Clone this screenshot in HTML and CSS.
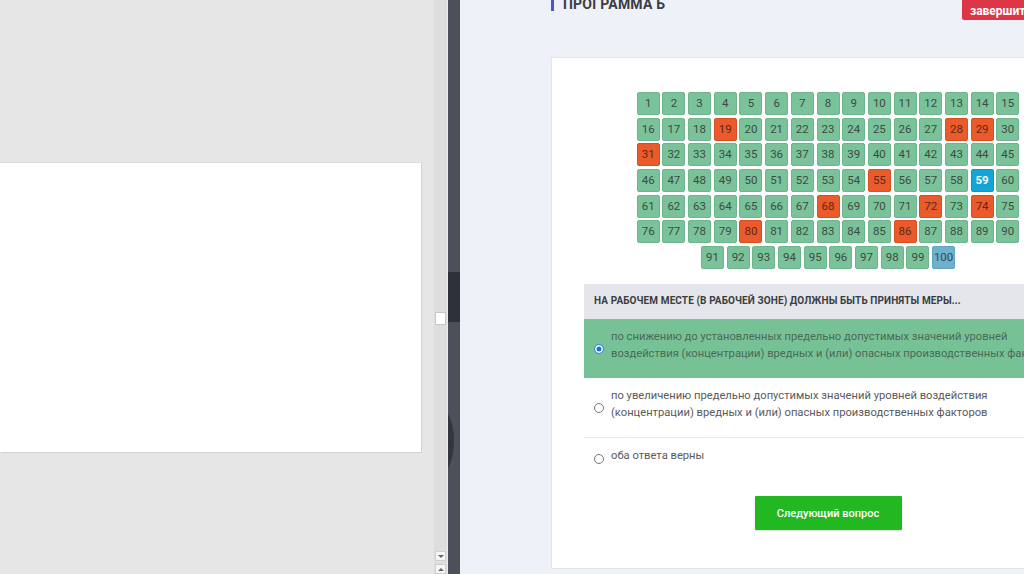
FILE: index.html
```html
<!DOCTYPE html>
<html lang="ru">
<head>
<meta charset="utf-8">
<title>Программа Б</title>
<link rel="stylesheet" href="styles.css">
</head>
<body>
<div class="left">
  <div class="slide"></div>
</div>
<div class="scroll">
  <div class="thumb"></div>
  <div class="arrow arrow-down"></div>
  <div class="arrow arrow-up"></div>
</div>
<div class="dark">
  <div class="dark-block"></div>
  <div class="dark-arc"></div>
</div>
<main class="main">
  <header class="top">
    <h1 class="title">ПРОГРАММА Б</h1>
    <button class="finish">завершить</button>
  </header>
  <section class="card">
    <div class="grid">
      <span class="cell">1</span><span class="cell">2</span><span class="cell">3</span><span class="cell">4</span><span class="cell">5</span><span class="cell">6</span><span class="cell">7</span><span class="cell">8</span><span class="cell">9</span><span class="cell">10</span><span class="cell">11</span><span class="cell">12</span><span class="cell">13</span><span class="cell">14</span><span class="cell">15</span>
      <span class="cell">16</span><span class="cell">17</span><span class="cell">18</span><span class="cell wrong">19</span><span class="cell">20</span><span class="cell">21</span><span class="cell">22</span><span class="cell">23</span><span class="cell">24</span><span class="cell">25</span><span class="cell">26</span><span class="cell">27</span><span class="cell wrong">28</span><span class="cell wrong">29</span><span class="cell">30</span>
      <span class="cell wrong">31</span><span class="cell">32</span><span class="cell">33</span><span class="cell">34</span><span class="cell">35</span><span class="cell">36</span><span class="cell">37</span><span class="cell">38</span><span class="cell">39</span><span class="cell">40</span><span class="cell">41</span><span class="cell">42</span><span class="cell">43</span><span class="cell">44</span><span class="cell">45</span>
      <span class="cell">46</span><span class="cell">47</span><span class="cell">48</span><span class="cell">49</span><span class="cell">50</span><span class="cell">51</span><span class="cell">52</span><span class="cell">53</span><span class="cell">54</span><span class="cell wrong">55</span><span class="cell">56</span><span class="cell">57</span><span class="cell">58</span><span class="cell current">59</span><span class="cell">60</span>
      <span class="cell">61</span><span class="cell">62</span><span class="cell">63</span><span class="cell">64</span><span class="cell">65</span><span class="cell">66</span><span class="cell">67</span><span class="cell wrong">68</span><span class="cell">69</span><span class="cell">70</span><span class="cell">71</span><span class="cell wrong">72</span><span class="cell">73</span><span class="cell wrong">74</span><span class="cell">75</span>
      <span class="cell">76</span><span class="cell">77</span><span class="cell">78</span><span class="cell">79</span><span class="cell wrong">80</span><span class="cell">81</span><span class="cell">82</span><span class="cell">83</span><span class="cell">84</span><span class="cell">85</span><span class="cell wrong">86</span><span class="cell">87</span><span class="cell">88</span><span class="cell">89</span><span class="cell">90</span>
      <span class="cell">91</span><span class="cell">92</span><span class="cell">93</span><span class="cell">94</span><span class="cell">95</span><span class="cell">96</span><span class="cell">97</span><span class="cell">98</span><span class="cell">99</span><span class="cell pending">100</span>
    </div>
    <div class="question">
      <div class="q-title">НА РАБОЧЕМ МЕСТЕ (В РАБОЧЕЙ ЗОНЕ) ДОЛЖНЫ БЫТЬ ПРИНЯТЫ МЕРЫ...</div>
      <label class="answer selected">
        <span class="radio"></span>
        <span class="a-text">по снижению до установленных предельно допустимых значений уровней воздействия (концентрации) вредных и (или) опасных производственных факторов</span>
      </label>
      <label class="answer bordered">
        <span class="radio"></span>
        <span class="a-text">по увеличению предельно допустимых значений уровней воздействия (концентрации) вредных и (или) опасных производственных факторов</span>
      </label>
      <label class="answer">
        <span class="radio"></span>
        <span class="a-text">оба ответа верны</span>
      </label>
    </div>
    <div class="actions">
      <button class="next">Следующий вопрос</button>
    </div>
  </section>
</main>
</body>
</html>
```

FILE: styles.css
```css
* { box-sizing: border-box; }

html, body {
  margin: 0;
  padding: 0;
}

body {
  width: 1024px;
  height: 574px;
  overflow: hidden;
  display: flex;
  font-family: Roboto, "Liberation Sans", Arial, sans-serif;
  background: #e6e6e6;
}

.left {
  width: 434px;
  flex: none;
  background: #e6e6e6;
  padding-top: 162px;
}

.slide {
  width: 421px;
  height: 290px;
  background: #ffffff;
  border-top: 1px solid #dcdcdc;
  box-shadow: 1px 1px 0 #d2d2d2;
}

.scroll {
  width: 14px;
  flex: none;
  background: #dedede;
  border-right: 1px solid #eaeaea;
  display: flex;
  flex-direction: column;
  align-items: center;
  padding-top: 312px;
}

.thumb {
  width: 11px;
  height: 14px;
  background: #ffffff;
  border: 1px solid #c8c8c8;
}

.arrow {
  width: 11px;
  height: 11px;
  background: #f6f6f6;
  border: 1px solid #d0d0d0;
  position: relative;
}

.arrow-down { margin-top: 226px; }
.arrow-up { margin-top: 3px; }

.arrow::after {
  content: "";
  position: absolute;
  left: 2px;
  top: 3px;
  border-left: 3px solid transparent;
  border-right: 3px solid transparent;
}

.arrow-down::after { border-top: 3px solid #666; }
.arrow-up::after { border-bottom: 3px solid #666; }

.dark {
  width: 12px;
  flex: none;
  background: #4c505b;
  padding-top: 272px;
  overflow: hidden;
}

.dark-block {
  width: 12px;
  height: 50px;
  background: #2e3139;
}

.dark-arc {
  margin-top: 86px;
  margin-left: -22px;
  width: 28px;
  height: 66px;
  border-radius: 50%;
  background: #33363f;
}

.main {
  flex: 1;
  background: #eef1f8;
  padding-left: 91px;
  overflow: hidden;
  min-width: 0;
}

.top {
  display: flex;
  align-items: flex-start;
  height: 59px;
  margin-top: -2px;
}

.title {
  margin: 0;
  width: 411px;
  flex: none;
  font-size: 14px;
  font-weight: 700;
  line-height: 13px;
  color: #3a3d45;
  padding-left: 9px;
  border-left: 3px solid #4a58c8;
  letter-spacing: 0.2px;
}

.finish {
  flex: none;
  border: 0;
  background: #dc3545;
  color: #ffffff;
  font-family: inherit;
  font-size: 12px;
  font-weight: 700;
  height: 22px;
  padding: 3px 8px 0;
  line-height: 14px;
  border-radius: 2px;
  white-space: nowrap;
}

.card {
  width: 554px;
  background: #ffffff;
  border: 1px solid #e2e5ec;
  padding: 34px 32px 38px;
}

.grid {
  width: 383px;
  margin: 0 auto;
  display: flex;
  flex-wrap: wrap;
  justify-content: center;
  gap: 2.7px;
}

.cell {
  width: 23px;
  height: 23px;
  border-radius: 2px;
  background: #7ac299;
  border: 1px solid #6eb58d;
  color: #3f4a44;
  font-size: 11.5px;
  line-height: 21px;
  text-align: center;
}

.cell.wrong {
  background: #ea5a2b;
  border-color: #d94f22;
  color: #5a2a1a;
}

.cell.current {
  background: #13a4d8;
  border-color: #0e96c8;
  color: #ffffff;
  font-weight: 700;
}

.cell.pending {
  background: #6fb0cc;
  border-color: #64a3bf;
  color: #34495a;
}

.question {
  margin-top: 15px;
  width: 490px;
}

.q-title {
  background: #e4e6eb;
  height: 35px;
  padding: 11px 0 0 10px;
  font-size: 10px;
  font-weight: 700;
  color: #3a3d42;
  white-space: nowrap;
  letter-spacing: 0.1px;
}

.answer {
  display: flex;
  align-items: center;
  gap: 7px;
  padding: 9px 10px 9px 10px;
}

.answer.selected {
  background: #77c197;
}

.answer.bordered {
  border-bottom: 1px solid #e8e8e8;
}

.a-text {
  font-size: 11.2px;
  line-height: 17px;
  color: #5a5a5a;
  margin-bottom: 7px;
}

.answer.selected .a-text {
  color: #4b6a58;
}

.radio {
  flex: none;
  width: 10px;
  height: 10px;
  border-radius: 50%;
  border: 1px solid #777;
  background: #ffffff;
}

.answer.selected .radio {
  border-color: #3d8be0;
  background: #1f6fd8;
  box-shadow: inset 0 0 0 1.5px #ffffff;
}

.actions {
  display: flex;
  justify-content: center;
  margin-top: 16px;
}

.next {
  width: 147px;
  height: 34px;
  border: 0;
  background: #22b822;
  color: #ffffff;
  font-family: inherit;
  font-size: 11px;
  font-weight: 500;
  border-radius: 1px;
  box-shadow: 0 1px 2px rgba(0,0,0,0.15);
}
```
